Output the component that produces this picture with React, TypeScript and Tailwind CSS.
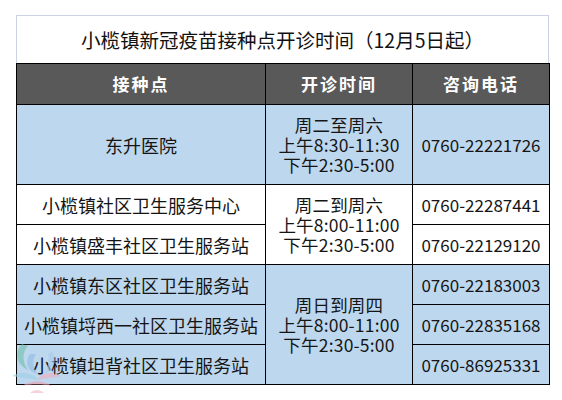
import React from "react"

type Site = { name: string; phone: string }

const groups: { bg: string; time: string[]; sites: Site[]; tall?: boolean }[] = [
  {
    bg: "bg-[#bdd7ee]",
    time: ["周二至周六", "上午8:30-11:30", "下午2:30-5:00"],
    sites: [{ name: "东升医院", phone: "0760-22221726" }],
    tall: true,
  },
  {
    bg: "bg-white",
    time: ["周二到周六", "上午8:00-11:00", "下午2:30-5:00"],
    sites: [
      { name: "小榄镇社区卫生服务中心", phone: "0760-22287441" },
      { name: "小榄镇盛丰社区卫生服务站", phone: "0760-22129120" },
    ],
  },
  {
    bg: "bg-[#bdd7ee]",
    time: ["周日到周四", "上午8:00-11:00", "下午2:30-5:00"],
    sites: [
      { name: "小榄镇东区社区卫生服务站", phone: "0760-22183003" },
      { name: "小榄镇埒西一社区卫生服务站", phone: "0760-22835168" },
      { name: "小榄镇坦背社区卫生服务站", phone: "0760-86925331" },
    ],
  },
]

function Watermark() {
  return (
    <svg
      className="absolute left-[8px] top-[340px] opacity-60 pointer-events-none"
      width="56"
      height="56"
      viewBox="0 0 56 56"
    >
      <path d="M14 4 C6 12 8 24 20 30 C14 22 14 12 20 6 Z" fill="#6fc0aa" />
      <path d="M22 14 C16 22 20 32 30 34 C24 28 24 20 28 14 Z" fill="#8fbbe4" />
      <path d="M44 12 C50 20 46 30 36 34 C40 28 42 20 40 14 Z" fill="#a9cbec" />
      <path d="M4 36 C14 30 26 34 30 40 C22 38 12 38 4 36 Z" fill="#9ccfe6" />
      <path d="M52 36 C42 30 32 34 30 40 C36 38 46 38 52 36 Z" fill="#f0aebc" />
      <path d="M14 46 C22 40 36 40 44 46 C36 44 22 44 14 46 Z" fill="#ef9fad" />
      <path d="M22 53 C26 49 32 49 36 53 Z" fill="#f3b8c3" />
    </svg>
  )
}

export default function App() {
  const font = "font-['Noto_Sans_CJK_SC','Liberation_Sans',sans-serif]"
  return (
    <div className={`relative w-[562px] h-[400px] bg-white pt-[15px] pl-[16px] ${font}`}>
      <div className="w-[533px] h-[48px] border-t border-l border-r border-[#c9d3e3] flex items-center justify-center text-[19.5px] text-[#111] leading-none">
        小榄镇新冠疫苗接种点开诊时间（12月5日起）
      </div>
      <table className="border-collapse table-fixed w-[533px] text-[#151515]">
        <colgroup>
          <col className="w-[249px]" />
          <col className="w-[147px]" />
          <col className="w-[137px]" />
        </colgroup>
        <thead>
          <tr className="h-[41px] bg-[#595959] text-white text-[17px] font-bold tracking-[2px]">
            <th className="border border-black font-bold">接种点</th>
            <th className="border border-black font-bold">开诊时间</th>
            <th className="border border-black font-bold">咨询电话</th>
          </tr>
        </thead>
        <tbody className="text-[18px]">
          {groups.map((g) =>
            g.sites.map((s, i) => (
              <tr key={s.name} className={`${g.tall ? "h-[80px]" : "h-[40px]"} ${g.bg}`}>
                <td className="border border-black text-center whitespace-nowrap leading-none">{s.name}</td>
                {i === 0 && (
                  <td rowSpan={g.sites.length} className="border border-black text-center text-[17.5px] leading-[20px] tracking-[0.2px]">
                    {g.time.map((t) => (
                      <div key={t} className="whitespace-nowrap">{t}</div>
                    ))}
                  </td>
                )}
                <td className="border border-black text-center whitespace-nowrap leading-none text-[17px]">
                  {s.phone}
                </td>
              </tr>
            ))
          )}
        </tbody>
      </table>
      <Watermark />
    </div>
  )
}
